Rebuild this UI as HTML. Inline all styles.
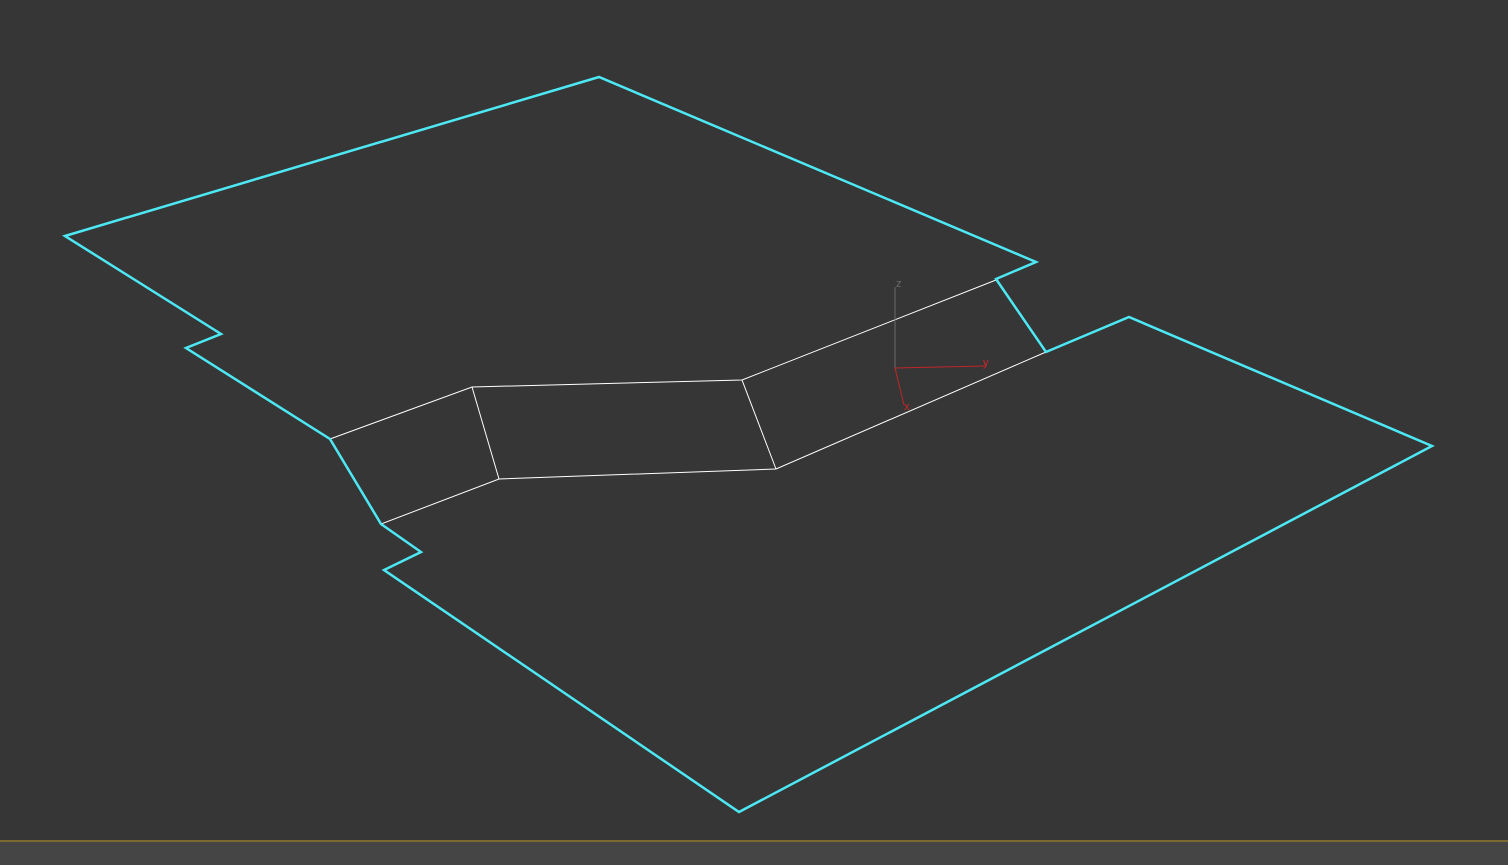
<!DOCTYPE html>
<html><head><style>
html,body{margin:0;padding:0;width:1508px;height:865px;overflow:hidden;background:#363636}
</style></head><body>
<svg width="1508" height="865" style="position:absolute;left:0;top:0" font-family="Liberation Sans, sans-serif">
<rect x="0" y="0" width="1508" height="840" fill="#363636"/>
<rect x="0" y="840" width="1508" height="2" fill="#7a6a32"/>
<rect x="0" y="842" width="1508" height="23" fill="#454545"/>
<g stroke="#ffffff" stroke-width="1" fill="none">
<polyline points="330,439 472,387 742,380 996,280"/>
<polyline points="381,524 499,479 776,469 1046,352"/>
<line x1="472" y1="387" x2="499" y2="479"/>
<line x1="742" y1="380" x2="776" y2="469"/>
</g>
<polygon points="65,236 599,77 1036,262 996,279 1046,352 1129,317 1432,446 739,812 384,570 421,552 381,524 330,439 186,348 221,334" fill="none" stroke="#4de8f4" stroke-width="2.5" stroke-linejoin="miter"/>
<line x1="895" y1="287" x2="895" y2="368" stroke="#6a6a6a" stroke-width="1"/>
<text x="896" y="287" fill="#6a6a6a" font-size="11">z</text>
<line x1="895" y1="368" x2="985" y2="366" stroke="#c0262a" stroke-width="1"/>
<text x="983" y="366" fill="#d0262a" font-size="11">y</text>
<line x1="895" y1="368" x2="904" y2="405" stroke="#c0262a" stroke-width="1"/>
<text x="904" y="410" fill="#d0262a" font-size="11">x</text>
</svg>
</body></html>
